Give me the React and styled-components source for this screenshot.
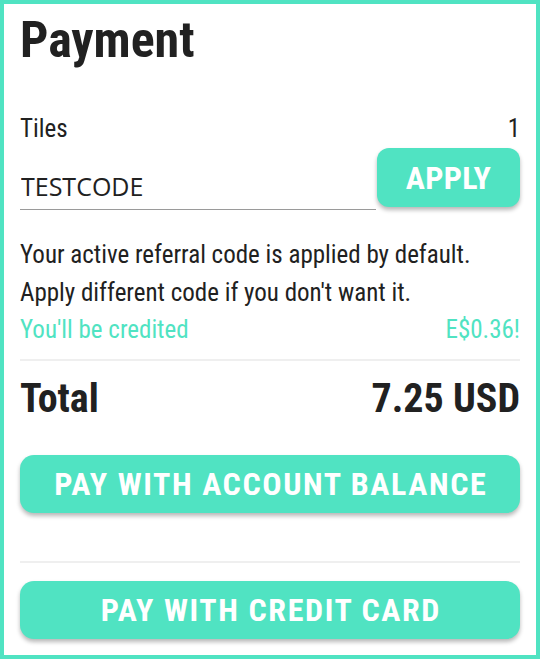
import React from "react";
import styled, { createGlobalStyle } from "styled-components";

const teal = "#50e3c2";
const ink = "#212121";
const cond = `"Roboto Condensed", "Liberation Sans Narrow", Roboto, sans-serif`;

const Global = createGlobalStyle`
  html, body { margin: 0; padding: 0; background: #fff; }
  * { box-sizing: border-box; }
`;

const Card = styled.div`
  width: 540px;
  height: 659px;
  border: 4px solid ${teal};
  padding: 8px 16px 16px;
  display: flex;
  flex-direction: column;
  font-family: ${cond};
  font-stretch: condensed;
  color: ${ink};
  background: #fff;
`;

const Title = styled.h1`
  margin: 0 0 45px;
  font-size: 50px;
  line-height: 56px;
  font-weight: 700;
`;

const Row = styled.div`
  display: flex;
  justify-content: space-between;
  align-items: baseline;
  font-size: ${(p) => p.$size || 25}px;
  line-height: ${(p) => p.$lh || 32}px;
  font-weight: ${(p) => (p.$bold ? 700 : 400)};
  color: ${(p) => p.$color || ink};
  margin-top: ${(p) => p.$mt || 0}px;
`;

const CodeRow = styled.div`
  display: flex;
  align-items: flex-start;
  margin-top: 3px;
`;

const CodeInput = styled.input`
  flex: 1;
  min-width: 0;
  border: none;
  border-bottom: 1px solid #9a9a9a;
  padding: 21px 0 7px 1px;
  height: 62px;
  font-family: "Open Sans", "Noto Sans", sans-serif;
  font-size: 25px;
  line-height: 33px;
  color: ${ink};
  outline: none;
  background: transparent;
`;

const Button = styled.button`
  border: none;
  border-radius: ${(p) => (p.$small ? 12 : 14)}px;
  background: ${teal};
  color: #fff;
  font-family: ${cond};
  font-stretch: condensed;
  font-weight: 700;
  font-size: 32px;
  letter-spacing: ${(p) => (p.$small ? "0.3px" : "1.6px")};
  height: ${(p) => (p.$small ? 59 : 58)}px;
  width: ${(p) => (p.$small ? "143px" : "100%")};
  margin-left: ${(p) => (p.$small ? "1px" : "0")};
  margin-top: ${(p) => p.$mt || 0}px;
  box-shadow: 0 3px 4px rgba(0, 0, 0, 0.28);
  text-transform: uppercase;
  cursor: pointer;
  padding: 0 0 0 ${(p) => (p.$small ? "0" : "1.6px")};
`;

const Note = styled.p`
  margin: 26px 0 0;
  font-size: 25px;
  line-height: 38px;
`;

const Divider = styled.hr`
  border: none;
  height: 2px;
  background: #efefef;
  margin: ${(p) => p.$m};
  width: 100%;
`;

export default function App() {
  return (
    <>
      <Global />
      <Card>
        <Title>Payment</Title>
        <Row>
          <span>Tiles</span>
          <span>1</span>
        </Row>
        <CodeRow>
          <CodeInput defaultValue="TESTCODE" />
          <Button $small>Apply</Button>
        </CodeRow>
        <Note>
          Your active referral code is applied by default.
          <br />
          Apply different code if you don't want it.
        </Note>
        <Row $color={teal} $mt={2}>
          <span>You'll be credited</span>
          <span>E$0.36!</span>
        </Row>
        <Divider $m="13px 0 14px" />
        <Row $size={40} $lh={48} $bold>
          <span>Total</span>
          <span>7.25 USD</span>
        </Row>
        <Button $mt={32}>Pay with account balance</Button>
        <Divider $m="48px 0 18px" />
        <Button>Pay with credit card</Button>
      </Card>
    </>
  );
}
